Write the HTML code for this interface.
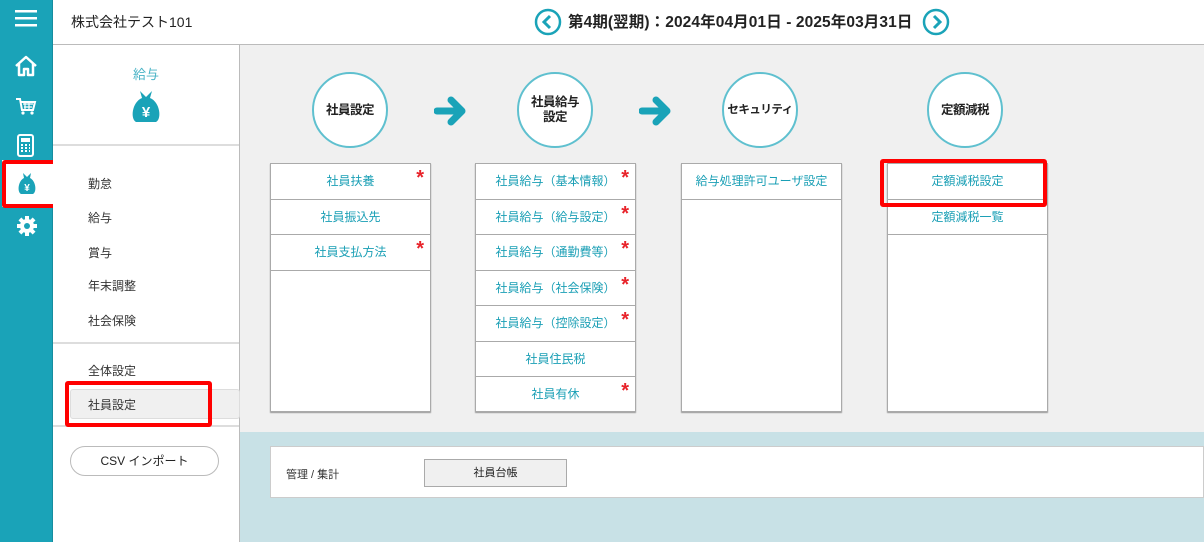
<!DOCTYPE html>
<html><head><meta charset="utf-8"><style>
*{margin:0;padding:0;box-sizing:border-box}
body{width:1204px;height:542px;overflow:hidden;position:relative;background:#fff;font-family:"Liberation Sans","Noto Sans CJK JP",sans-serif;color:#222}
.a{position:absolute}
.side{left:0;top:0;width:53px;height:542px;background:#1aa3b8;border-right:1px solid #168d9f}
.ic{position:absolute;left:14px}
.hdr{left:53px;top:0;width:1151px;height:45px;border-bottom:1px solid #bbb;background:#fff}
.lp{left:53px;top:45px;width:187px;height:497px;background:#fff;border-right:1px solid #bbb}
.main{left:240px;top:45px;width:964px;height:387px;background:#f0f0f0}
.bot{left:240px;top:432px;width:964px;height:110px;background:#c8e1e6}
.mi{position:absolute;left:35px;font-size:12px;color:#333}
.hr{position:absolute;left:0;width:186px;height:2px;background:#ddd}
.circ{position:absolute;width:76px;height:76px;border-radius:50%;border:2px solid #5fc0cf;background:#fff;display:flex;align-items:center;justify-content:center;text-align:center;font-weight:bold;font-size:12.5px;line-height:15px;color:#222;white-space:nowrap;letter-spacing:-0.5px}
.box{position:absolute;top:163px;width:161px;height:249px;background:#fff;border:1px solid #aaa;box-shadow:0 1px 1px #999}
.r{height:35.5px;border-bottom:1px solid #aaa;font-size:12px;color:#1a9fb5;text-align:center;line-height:34px;position:relative}
.r b{position:absolute;right:6px;top:-3px;color:#e8232a;font-size:20px;font-weight:bold}
.red{position:absolute;border:4px solid #f00;border-radius:3px}
.arr{position:absolute;top:95px}
</style></head><body>
<div class="a side">
 <svg class="ic" style="top:8px" width="24" height="20"><rect x="1" y="2" width="22" height="2.5" fill="#fff"/><rect x="1" y="9" width="22" height="2.5" fill="#fff"/><rect x="1" y="16" width="22" height="2.5" fill="#fff"/></svg>
 <svg class="ic" style="top:55px" width="24" height="22"><path d="M2 11 L12 2 L22 11 M5 9 V20 H10 V14 H14 V20 H19 V9" fill="none" stroke="#fff" stroke-width="2.5" stroke-linejoin="round"/></svg>
 <svg class="ic" style="top:96px" width="24" height="20"><path d="M2 3 H6 L8 14 H19 L21 6 H7" fill="none" stroke="#fff" stroke-width="2"/><path d="M9 8 H19 M10 11 H18 M11 6 V14 M15 6 V14" stroke="#fff" stroke-width="1.2"/><circle cx="9" cy="17" r="1.6" fill="#fff"/><circle cx="18" cy="17" r="1.6" fill="#fff"/></svg>
 <svg class="ic" style="top:134px;left:17px" width="18" height="24"><rect x="1" y="1" width="15" height="21" rx="2" fill="none" stroke="#fff" stroke-width="2"/><rect x="4" y="4" width="9" height="4" fill="#fff"/><path d="M4 11h2M8 11h2M12 11h1M4 14h2M8 14h2M12 14h1M4 17h2M8 17h2M12 17h1" stroke="#fff" stroke-width="2"/></svg>
 <div class="a" style="left:2px;top:160px;width:55px;height:47px;background:#fff"></div>
 <svg class="a" style="left:17px;top:172px" width="20" height="24"><path d="M6 1 L10 5 L14 1 L13 6 C19 9 20 20 16 22 H4 C0 20 1 9 7 6 Z" fill="#1aa3b8"/><text x="10" y="19" font-size="10" font-weight="bold" fill="#fff" text-anchor="middle" font-family="Liberation Sans">¥</text></svg>
 <svg class="ic" style="top:215px;left:16px" width="22" height="22" viewBox="0 0 22 22"><g fill="#fff"><circle cx="11" cy="11" r="7"/><rect x="9" y="1" width="4" height="20"/><rect x="1" y="9" width="20" height="4"/><rect x="9" y="1" width="4" height="20" transform="rotate(45 11 11)"/><rect x="9" y="1" width="4" height="20" transform="rotate(-45 11 11)"/></g><circle cx="11" cy="11" r="3" fill="#1aa3b8"/></svg>
</div>
<div class="red" style="left:2px;top:160px;width:56px;height:48px"></div>
<div class="a hdr">
 <div class="a" style="left:18px;top:12px;font-size:14px">株式会社テスト101</div>
 <svg class="a" style="left:481px;top:8px" width="28" height="28"><circle cx="14" cy="14" r="12" fill="#fff" stroke="#1aa3b8" stroke-width="2.5"/><path d="M16 8 L10 14 L16 20" fill="none" stroke="#1aa3b8" stroke-width="3"/></svg>
 <div class="a" style="left:515px;top:10px;font-size:15.5px;font-weight:bold;white-space:nowrap;letter-spacing:0.1px">第4期(翌期)：2024年04月01日 - 2025年03月31日</div>
 <svg class="a" style="left:869px;top:8px" width="28" height="28"><circle cx="14" cy="14" r="12" fill="#fff" stroke="#1aa3b8" stroke-width="2.5"/><path d="M12 8 L18 14 L12 20" fill="none" stroke="#1aa3b8" stroke-width="3"/></svg>
</div>
<div class="a lp">
 <div class="a" style="left:0;width:186px;top:19px;text-align:center;font-size:13px;color:#4ab3c6">給与</div>
 <svg class="a" style="left:77px;top:44px" width="32" height="36"><path d="M10 2 L16 8 L22 2 L20 9 C30 13 32 30 26 33 H6 C0 30 2 13 12 9 Z" fill="#1aa3b8"/><text x="16" y="28" font-size="15" font-weight="bold" fill="#fff" text-anchor="middle" font-family="Liberation Sans">¥</text></svg>
 <div class="hr" style="top:99px"></div>
 <div class="mi" style="top:130px">勤怠</div>
 <div class="mi" style="top:164px">給与</div>
 <div class="mi" style="top:199px">賞与</div>
 <div class="mi" style="top:232px">年末調整</div>
 <div class="mi" style="top:267px">社会保険</div>
 <div class="hr" style="top:297px"></div>
 <div class="mi" style="top:317px">全体設定</div>
 <div class="a" style="left:17px;top:344px;width:170px;height:30px;background:#f0f0f0;border:1px solid #ddd;border-radius:3px"></div>
 <div class="mi" style="top:351px">社員設定</div>
 <div class="hr" style="top:380px"></div>
 <div class="a" style="left:17px;top:401px;width:149px;height:30px;border:1px solid #bbb;border-radius:15px;text-align:center;line-height:28px;font-size:12px">CSV インポート</div>
</div>
<div class="red" style="left:65px;top:381px;width:147px;height:46px"></div>
<div class="a main"></div>
<div class="a bot"><div class="a" style="left:30px;top:14px;width:934px;height:52px;background:#fff;border:1px solid #ccc">
 <div class="a" style="left:15px;top:19px;font-size:11px;color:#333">管理 / 集計</div>
 <div class="a" style="left:153px;top:12px;width:143px;height:28px;background:#f0f0f0;border:1px solid #aaa;text-align:center;line-height:26px;font-size:11px">社員台帳</div>
</div></div>

<div class="circ" style="left:312px;top:72px">社員設定</div>
<div class="circ" style="left:517px;top:72px">社員給与<br>設定</div>
<div class="circ" style="left:722px;top:72px;font-size:11.5px">セキュリティ</div>
<div class="circ" style="left:927px;top:72px">定額減税</div>
<svg class="arr" style="left:434px" width="34" height="32"><path d="M3 16 H27 M17 5 L28 16 L17 27" fill="none" stroke="#1aa3b8" stroke-width="7" stroke-linecap="round" stroke-linejoin="round"/></svg>
<svg class="arr" style="left:639px" width="34" height="32"><path d="M3 16 H27 M17 5 L28 16 L17 27" fill="none" stroke="#1aa3b8" stroke-width="7" stroke-linecap="round" stroke-linejoin="round"/></svg>

<div class="box" style="left:270px">
 <div class="r">社員扶養<b>*</b></div>
 <div class="r">社員振込先</div>
 <div class="r">社員支払方法<b>*</b></div>
</div>
<div class="box" style="left:475px">
 <div class="r">社員給与（基本情報）<b>*</b></div>
 <div class="r">社員給与（給与設定）<b>*</b></div>
 <div class="r">社員給与（通勤費等）<b>*</b></div>
 <div class="r">社員給与（社会保険）<b>*</b></div>
 <div class="r">社員給与（控除設定）<b>*</b></div>
 <div class="r">社員住民税</div>
 <div class="r" style="border-bottom:none">社員有休<b>*</b></div>
</div>
<div class="box" style="left:681px">
 <div class="r">給与処理許可ユーザ設定</div>
</div>
<div class="box" style="left:887px">
 <div class="r">定額減税設定</div>
 <div class="r">定額減税一覧</div>
</div>
<div class="red" style="left:880px;top:159px;width:167px;height:48px"></div>
</body></html>
